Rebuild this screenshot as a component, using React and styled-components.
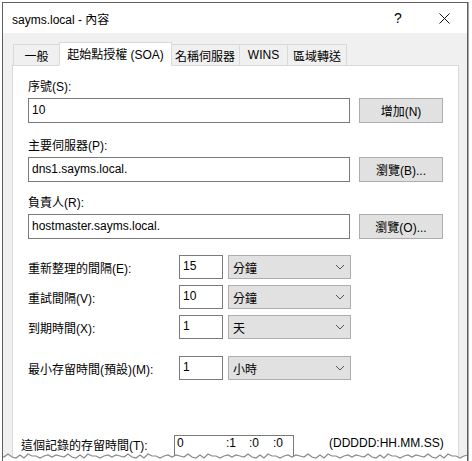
import React from 'react'
import styled, { createGlobalStyle } from 'styled-components'

const GlobalStyle = createGlobalStyle`
  html, body {
    margin: 0;
    padding: 0;
    background: #ffffff;
  }
  body {
    font-family: "Liberation Sans", "Noto Sans CJK TC", sans-serif;
    font-size: 12px;
    color: #000;
  }
`

const Page = styled.div`
  padding: 2px 0 0 2px;
  width: 472px;
  height: 461px;
  box-sizing: border-box;
  overflow: hidden;
`

const Window = styled.div`
  position: relative;
  width: 466px;
  height: 459px;
  overflow: hidden;
  border: 1px solid #5f5f5f;
  border-bottom: none;
  box-shadow: 1px 0 0 #a8a8a8;
  background: #f0f0f0;
  box-sizing: border-box;
`

const TitleBar = styled.div`
  height: 30px;
  background: #fff;
  display: flex;
  align-items: center;
  padding-left: 9px;
`

const Title = styled.div`
  flex: 1;
  font-size: 12px;
  padding-top: 1px;
`

const TitleButton = styled.div`
  width: 46px;
  height: 30px;
  display: flex;
  align-items: center;
  justify-content: center;
  font-size: 14px;
`

const Body = styled.div`
  padding: 8px 8px 0 9px;
`

const TabRow = styled.div`
  display: flex;
  align-items: flex-end;
  height: 24px;
  padding-left: 1px;
`

const Tab = styled.div`
  height: ${p => (p.$active ? '24px' : '21px')};
  width: ${p => p.$w}px;
  box-sizing: border-box;
  display: flex;
  align-items: center;
  justify-content: center;
  background: ${p => (p.$active ? '#fff' : '#f0f0f0')};
  border: 1px solid #d9d9d9;
  border-bottom: ${p => (p.$active ? '1px solid #fff' : 'none')};
  border-left: ${p => (p.$first || p.$active ? '1px solid #d9d9d9' : 'none')};
  margin-left: ${p => (p.$active ? '-1px' : '0')};
  margin-right: ${p => (p.$active ? '-1px' : '0')};
  margin-bottom: ${p => (p.$active ? '-1px' : '0')};
  padding-bottom: ${p => (p.$active ? '2px' : '0')};
  position: relative;
  z-index: ${p => (p.$active ? 2 : 1)};
`

const Panel = styled.div`
  background: #fff;
  border: 1px solid #d9d9d9;
  height: 420px;
  padding: 14px 15px 0 15px;
  box-sizing: border-box;
`

const Label = styled.div`
  height: 14px;
  line-height: 14px;
  margin-bottom: 4px;
`

const FieldRow = styled.div`
  display: flex;
  align-items: center;
  margin-bottom: ${p => p.$mb || 0}px;
`

const TextBox = styled.div`
  width: ${p => p.$w}px;
  height: ${p => p.$h || 25}px;
  box-sizing: border-box;
  border: 1px solid #7a7a7a;
  background: #fff;
  display: flex;
  align-items: center;
  padding: 0 0 2px 3px;
  flex-shrink: 0;
`

const Button = styled.div`
  width: 86px;
  height: 25px;
  margin-left: 9px;
  box-sizing: border-box;
  background: #e1e1e1;
  border: 1px solid #adadad;
  display: flex;
  align-items: center;
  justify-content: center;
`

const RowLabel = styled.div`
  width: 151px;
  flex-shrink: 0;
`

const Select = styled.div`
  width: 123px;
  height: 24px;
  margin-left: 5px;
  box-sizing: border-box;
  background: #e1e1e1;
  border: 1px solid #adadad;
  display: flex;
  align-items: center;
  padding: 0 5px 0 4px;
`

const SelectText = styled.div`
  flex: 1;
`

const Spacer = styled.div`
  height: ${p => p.$h}px;
`

const BottomRow = styled.div`
  display: flex;
  align-items: flex-start;
  margin-left: -7px;
`

const BottomLabel = styled.div`
  width: 153px;
  padding-top: 1px;
  flex-shrink: 0;
`

const TtlBox = styled.div`
  width: 120px;
  height: 30px;
  box-sizing: border-box;
  border: 1px solid #7a7a7a;
  border-bottom: none;
  display: flex;
  padding: 0 0 0 2px;
`

const TtlPart = styled.span`
  width: ${p => p.$w}px;
  flex-shrink: 0;
`

const Format = styled.div`
  margin-left: 35px;
  padding-top: 1px;
`

const Tear = styled.svg`
  position: absolute;
  left: -3px;
  bottom: 0;
  display: block;
`

const Chevron = () => (
  <svg width="10" height="6" viewBox="0 0 10 6">
    <polyline points="1,1 5,5 9,1" fill="none" stroke="#555" strokeWidth="1" />
  </svg>
)

const CloseIcon = () => (
  <svg width="11" height="11" viewBox="0 0 11 11">
    <line x1="0.5" y1="0.5" x2="10.5" y2="10.5" stroke="#111" strokeWidth="1" />
    <line x1="10.5" y1="0.5" x2="0.5" y2="10.5" stroke="#111" strokeWidth="1" />
  </svg>
)

function tearPoints() {
  const pts = []
  const ys = [2, 4, 1, 3, 5, 2, 4, 1, 3, 2, 5, 3, 1, 4, 2]
  for (let i = 0; i <= 118; i++) {
    pts.push(`${i * 4},${ys[i % ys.length] + (i % 3 === 0 ? 1 : 0)}`)
  }
  return pts
}

const Interval = ({ label, value, unit, mb }) => (
  <FieldRow $mb={mb}>
    <RowLabel>{label}</RowLabel>
    <TextBox $w={44} $h={24}>{value}</TextBox>
    <Select>
      <SelectText>{unit}</SelectText>
      <Chevron />
    </Select>
  </FieldRow>
)

export default function App() {
  const pts = tearPoints()
  return (
    <Page>
      <GlobalStyle />
      <Window>
        <TitleBar>
          <Title>sayms.local - 內容</Title>
          <TitleButton>?</TitleButton>
          <TitleButton>
            <CloseIcon />
          </TitleButton>
        </TitleBar>
        <Body>
          <TabRow>
            <Tab $first $w={47}>一般</Tab>
            <Tab $active $w={113}>起始點授權 (SOA)</Tab>
            <Tab $w={69}>名稱伺服器</Tab>
            <Tab $w={48}>WINS</Tab>
            <Tab $w={59}>區域轉送</Tab>
          </TabRow>
          <Panel>
            <Label>序號(S):</Label>
            <FieldRow $mb={16}>
              <TextBox $w={322}>10</TextBox>
              <Button>增加(N)</Button>
            </FieldRow>
            <Label>主要伺服器(P):</Label>
            <FieldRow $mb={14}>
              <TextBox $w={322}>dns1.sayms.local.</TextBox>
              <Button>瀏覽(B)...</Button>
            </FieldRow>
            <Label>負責人(R):</Label>
            <FieldRow $mb={16}>
              <TextBox $w={322}>hostmaster.sayms.local.</TextBox>
              <Button>瀏覽(O)...</Button>
            </FieldRow>
            <Interval label="重新整理的間隔(E):" value="15" unit="分鐘" mb={6} />
            <Interval label="重試間隔(V):" value="10" unit="分鐘" mb={6} />
            <Interval label="到期時間(X):" value="1" unit="天" mb={17} />
            <Interval label="最小存留時間(預設)(M):" value="1" unit="小時" />
            <Spacer $h={55} />
            <BottomRow>
              <BottomLabel>這個記錄的存留時間(T):</BottomLabel>
              <TtlBox>
                <TtlPart $w={49}>0</TtlPart>
                <TtlPart $w={23}>:1</TtlPart>
                <TtlPart $w={24}>:0</TtlPart>
                <TtlPart $w={20}>:0</TtlPart>
              </TtlBox>
              <Format>(DDDDD:HH.MM.SS)</Format>
            </BottomRow>
          </Panel>
        </Body>
        <Tear width="476" height="8" viewBox="0 0 476 8">
          <polygon points={`0,8 ${pts.join(' ')} 476,8`} fill="#fff" />
          <polyline points={pts.join(' ')} fill="none" stroke="#8a8a8a" strokeWidth="1.2" />
        </Tear>
      </Window>
    </Page>
  )
}
